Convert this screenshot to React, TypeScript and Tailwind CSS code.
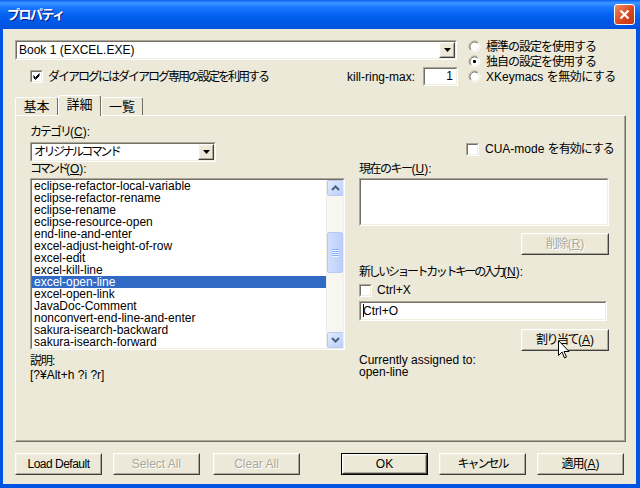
import React from "react";

const F = "font-['Liberation_Sans','Noto_Sans_CJK_JP',sans-serif]";

const commands = [
  "eclipse-refactor-local-variable",
  "eclipse-refactor-rename",
  "eclipse-rename",
  "eclipse-resource-open",
  "end-line-and-enter",
  "excel-adjust-height-of-row",
  "excel-edit",
  "excel-kill-line",
  "excel-open-line",
  "excel-open-link",
  "JavaDoc-Comment",
  "nonconvert-end-line-and-enter",
  "sakura-isearch-backward",
  "sakura-isearch-forward",
  "sakura-isearch-kill-line",
];

// Japanese text run, squeezed to the narrow widths of the original UI font
function J({ children, t = "tracking-[-1px]" }: { children: React.ReactNode; t?: string }) {
  return <span className={t}>{children}</span>;
}

// "(X):" style mnemonic suffix
function Mn({ k, colon }: { k: string; colon?: boolean }) {
  return (
    <span>
      (<span className="underline">{k}</span>){colon ? ":" : ""}
    </span>
  );
}

function Sunken({ className = "", children }: { className?: string; children?: React.ReactNode }) {
  return (
    <div className={`border border-[#aca899] border-r-white border-b-white ${className}`}>
      <div className="w-full h-full border border-[#716f64] border-r-[#f1efe2] border-b-[#f1efe2] bg-white overflow-hidden">
        {children}
      </div>
    </div>
  );
}

function Raised({ className = "", children }: { className?: string; children?: React.ReactNode }) {
  return (
    <div className={`border border-white border-r-[#404040] border-b-[#404040] ${className}`}>
      <div className="w-full h-full border border-[#f1efe2] border-r-[#aca899] border-b-[#aca899] flex items-center justify-center">
        {children}
      </div>
    </div>
  );
}

function Btn({
  children,
  w = "w-[87px]",
  disabled,
  def,
}: {
  children: React.ReactNode;
  w?: string;
  disabled?: boolean;
  def?: boolean;
}) {
  const text = disabled ? "text-[#aca899] [text-shadow:1px_1px_0_#fff]" : "text-black";
  if (def) {
    return (
      <div className={`${w} h-[22px] border border-black`}>
        <Raised className="w-full h-full">
          <span className={`text-[12px] leading-none ${text}`}>{children}</span>
        </Raised>
      </div>
    );
  }
  return (
    <Raised className={`${w} h-[22px]`}>
      <span className={`text-[12px] leading-none ${text}`}>{children}</span>
    </Raised>
  );
}

function Check({ on }: { on?: boolean }) {
  return (
    <Sunken className="w-[13px] h-[13px] shrink-0">
      {on && (
        <svg width="9" height="9" viewBox="0 0 9 9" className="block">
          <path d="M1.5 3.5 L3.5 5.5 L7.5 1.5 M1.5 4.5 L3.5 6.5 L7.5 2.5 M1.5 5.5 L3.5 7.5 L7.5 3.5" stroke="black" strokeWidth="1" fill="none" />
        </svg>
      )}
    </Sunken>
  );
}

function Radio({ on }: { on?: boolean }) {
  return (
    <svg width="13" height="13" viewBox="0 0 13 13" className="shrink-0">
      <circle cx="6.5" cy="6.5" r="5" fill="white" />
      <path d="M2.61 10.39 A5.5 5.5 0 0 1 10.39 2.61" stroke="#aca899" fill="none" />
      <path d="M3.32 9.68 A4.5 4.5 0 0 1 9.68 3.32" stroke="#716f64" fill="none" />
      <path d="M10.39 2.61 A5.5 5.5 0 0 1 2.61 10.39" stroke="#ffffff" fill="none" />
      <path d="M9.68 3.32 A4.5 4.5 0 0 1 3.32 9.68" stroke="#f1efe2" fill="none" />
      {on && <rect x="5" y="5" width="3" height="3" rx="1" fill="black" />}
    </svg>
  );
}

function DropBtn() {
  return (
    <Raised className="w-[16px] h-full shrink-0 bg-[#ece9d8]">
      <svg width="7" height="4" viewBox="0 0 7 4">
        <path d="M0 0 H7 L3.5 4 Z" fill="black" />
      </svg>
    </Raised>
  );
}

function ScrollBtn({ up }: { up?: boolean }) {
  return (
    <div className="h-[16px] w-[17px] rounded-[2px] border border-[#b7caf5] bg-[linear-gradient(135deg,#e3ebfe,#b9cdfb)] flex items-center justify-center">
      <svg width="9" height="6" viewBox="0 0 9 6">
        <path d={up ? "M1 5 L4.5 1.5 L8 5" : "M1 1 L4.5 4.5 L8 1"} stroke="#4d6185" strokeWidth="2" fill="none" />
      </svg>
    </div>
  );
}

function Tab({ children, sel, w }: { children: React.ReactNode; sel?: boolean; w: string }) {
  if (sel) {
    return (
      <div className={`${w} h-[21px] -mb-px relative z-10 bg-[#ece9d8] border-t border-l border-white border-r border-r-[#716f64] rounded-t-[3px] flex items-center justify-center pb-[2px] text-[13px]`}>
        {children}
      </div>
    );
  }
  return (
    <div className={`${w} h-[18px] bg-[#ece9d8] border-t border-l border-white border-r border-r-[#716f64] rounded-t-[3px] flex items-center justify-center text-[13px]`}>
      {children}
    </div>
  );
}

export default function App() {
  return (
    <div className={`w-[640px] h-[488px] flex flex-col bg-[#0054e3] overflow-hidden text-[12px] text-black ${F}`}>
      {/* title bar */}
      <div className="h-[29px] shrink-0 flex items-center justify-between pl-[7px] pr-[5px] bg-[linear-gradient(to_bottom,#0a5ef0_0%,#3d95ff_10%,#1a78ff_25%,#0563f2_50%,#0058e8_75%,#0050dc_100%)]">
        <span className="text-white font-bold text-[13px] leading-none tracking-[-1.5px] [text-shadow:1px_1px_0_#0a1a80]">プロパティ</span>
        <div className="w-[21px] h-[21px] rounded-[3px] border border-white bg-[linear-gradient(135deg,#f08b62,#d8431a_60%,#c13a15)] flex items-center justify-center">
          <svg width="11" height="11" viewBox="0 0 11 11">
            <path d="M1.5 1.5 L9.5 9.5 M9.5 1.5 L1.5 9.5" stroke="white" strokeWidth="2.2" />
          </svg>
        </div>
      </div>

      {/* client area */}
      <div className="flex-1 ml-[3px] mr-[4px] mb-[4px] bg-[#ece9d8] flex flex-col">
        {/* top section */}
        <div className="flex pt-[11px] pl-[12px]">
          <div className="w-[443px] flex flex-col">
            <Sunken className="h-[20px] w-[442px]">
              <div className="flex h-full">
                <span className="flex-1 pl-[2px] leading-[16px]">Book 1 (EXCEL.EXE)</span>
                <DropBtn />
              </div>
            </Sunken>
            <div className="mt-[7px] h-[19px] flex items-center">
              <div className="ml-[15px]">
                <Check on />
              </div>
              <span className="ml-[5px] leading-none">
                <J t="tracking-[-2px]">ダイアログにはダイアログ専用の設定を利用する</J>
              </span>
              <span className="flex-1" />
              <span className="leading-none">kill-ring-max:</span>
              <Sunken className="ml-[8px] w-[35px] h-[19px]">
                <div className="text-right pr-[3px] leading-[15px]">1</div>
              </Sunken>
            </div>
          </div>
          <div className="ml-[10px] -mt-[1px] flex flex-col">
            <div className="h-[15px] flex items-center gap-[5px]">
              <Radio />
              <span className="leading-none">
                <J>標準の設定を使用する</J>
              </span>
            </div>
            <div className="h-[15px] flex items-center gap-[5px]">
              <Radio on />
              <span className="leading-none">
                <J>独自の設定を使用する</J>
              </span>
            </div>
            <div className="h-[15px] flex items-center gap-[5px]">
              <Radio />
              <span className="leading-none">
                XKeymacs <J t="tracking-[-0.5px]">を無効にする</J>
              </span>
            </div>
          </div>
        </div>

        {/* tabs */}
        <div className="mt-[9px] h-[20px] flex items-end pl-[12px]">
          <Tab w="w-[43px]">基本</Tab>
          <Tab w="w-[43px]" sel>
            詳細
          </Tab>
          <Tab w="w-[42px]">一覧</Tab>
        </div>

        {/* tab panel */}
        <div className="ml-[12px] w-[611px] h-[327px] border-t border-l border-white border-r border-b border-r-[#716f64] border-b-[#716f64]">
          <div className="w-full h-full border-r border-b border-[#aca899] flex pl-[14px]">
            {/* left column */}
            <div className="w-[315px] flex flex-col pt-[9px]">
              <div className="h-[14px] leading-[14px]">
                <J t="tracking-[-2px]">カテゴリ</J>
                <Mn k="C" colon />
              </div>
              <Sunken className="mt-[3px] h-[20px] w-[186px]">
                <div className="flex h-full">
                  <span className="flex-1 pl-[2px] leading-[16px]">
                    <J t="tracking-[-2.5px]">オリジナルコマンド</J>
                  </span>
                  <DropBtn />
                </div>
              </Sunken>
              <div className="h-[14px] leading-[14px]">
                <J t="tracking-[-3px]">コマンド</J>
                <Mn k="O" colon />
              </div>
              <Sunken className="mt-[2px] h-[172px] w-[315px]">
                <div className="flex h-full">
                  <div className="flex-1 flex flex-col overflow-hidden">
                    {commands.map((c) => (
                      <div
                        key={c}
                        className={`h-[12px] shrink-0 leading-[12px] pl-[2px] ${c === "excel-open-line" ? "bg-[#316ac5] text-white" : ""}`}
                      >
                        {c}
                      </div>
                    ))}
                  </div>
                  <div className="w-[17px] h-full flex flex-col bg-[#f7f6f1] border-l border-[#eeede5]">
                    <ScrollBtn up />
                    <div className="flex-1 flex flex-col">
                      <div className="mt-[36px] h-[41px] rounded-[2px] border border-[#b7caf5] bg-[linear-gradient(90deg,#d2defd,#bccffb)] flex flex-col items-center justify-center gap-[1px]">
                        {[0, 1, 2, 3].map((k) => (
                          <div key={k} className="w-[7px] h-[1px] bg-[#8caef5] shadow-[0_1px_0_#eef4fe]" />
                        ))}
                      </div>
                    </div>
                    <ScrollBtn />
                  </div>
                </div>
              </Sunken>
              <div className="mt-[4px] h-[14px] leading-[14px]">
                <J>説明</J>:
              </div>
              <div className="h-[14px] leading-[14px]">[?¥Alt+h ?i ?r]</div>
            </div>

            {/* right column */}
            <div className="ml-[14px] w-[250px] flex flex-col">
              <div className="mt-[26px] h-[14px] flex items-center ml-[107px] gap-[6px]">
                <Check />
                <span className="leading-none whitespace-nowrap">
                  CUA-mode <J>を有効にする</J>
                </span>
              </div>
              <div className="mt-[6px] h-[14px] leading-[14px]">
                <J t="tracking-[-1.5px]">現在のキー</J>
                <Mn k="U" colon />
              </div>
              <Sunken className="mt-[2px] h-[48px] w-[250px]" />
              <div className="mt-[7px] self-end">
                <Btn w="w-[88px]" disabled>
                  <J>削除</J>
                  <Mn k="R" />
                </Btn>
              </div>
              <div className="mt-[10px] h-[14px] leading-[14px] whitespace-nowrap">
                <J t="tracking-[-2.4px]">新しいショートカットキーの入力</J>
                <Mn k="N" colon />
              </div>
              <div className="mt-[4px] h-[14px] flex items-center gap-[5px]">
                <Check />
                <span className="leading-none">Ctrl+X</span>
              </div>
              <Sunken className="mt-[4px] h-[20px] w-[248px]">
                <div className="relative pl-[2px] leading-[16px]">
                  Ctrl+O
                  <span className="absolute left-[2px] top-[1px] w-px h-[13px] bg-black" />
                </div>
              </Sunken>
              <div className="mt-[8px] self-end relative">
                <Btn w="w-[88px]">
                  <J t="tracking-[-1.5px]">割り当て</J>
                  <Mn k="A" />
                </Btn>
                {/* mouse pointer */}
                <svg width="12" height="19" viewBox="0 0 12 19" className="absolute left-[37px] top-[11px]">
                  <path d="M0.5 0.5 V15.5 L4 12 L6.5 18 L8.5 17 L6 11.5 H11 Z" fill="white" stroke="black" strokeWidth="1" strokeLinejoin="miter" />
                </svg>
              </div>
              <div className="mt-[3px] h-[12px] leading-[12px]">Currently assigned to:</div>
              <div className="h-[12px] leading-[12px]">open-line</div>
            </div>
          </div>
        </div>

        {/* bottom buttons */}
        <div className="mt-[11px] flex pl-[12px]">
          <Btn>
            <span className="tracking-[-0.5px]">Load Default</span>
          </Btn>
          <div className="ml-[11px]">
            <Btn disabled>Select All</Btn>
          </div>
          <div className="ml-[13px]">
            <Btn disabled>Clear All</Btn>
          </div>
          <div className="ml-[41px]">
            <Btn def>OK</Btn>
          </div>
          <div className="ml-[11px]">
            <Btn>
              <J t="tracking-[-2px]">キャンセル</J>
            </Btn>
          </div>
          <div className="ml-[11px]">
            <Btn>
              <J>適用</J>
              <Mn k="A" />
            </Btn>
          </div>
        </div>
      </div>
    </div>
  );
}
